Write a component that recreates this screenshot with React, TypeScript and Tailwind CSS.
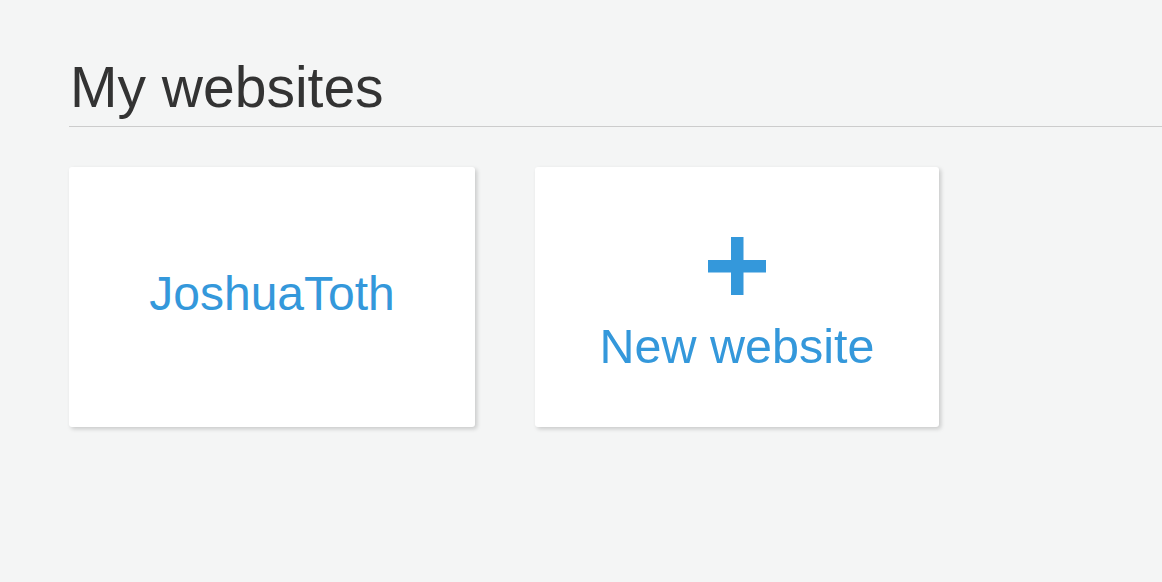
import React from "react";

export default function App() {
  const font = { fontFamily: '"Liberation Sans", Arial, Helvetica, sans-serif' };
  return (
    <div className="min-h-[582px] w-full bg-[#f4f5f5] pl-[69px] pt-[59px]" style={font}>
      <div className="border-b border-[#cccccc] pb-[10px]">
        <h1 className="ml-[1px] text-[57px] leading-none text-[#333333] font-normal">My websites</h1>
      </div>
      <div className="mt-[40px] flex gap-[60px]">
        <div className="flex h-[260px] w-[406px] items-center justify-center rounded-[3px] bg-white pb-[6px] shadow-[2px_2px_4px_rgba(0,0,0,0.18)]">
          <span className="text-[48px] leading-none text-[#3498db]">JoshuaToth</span>
        </div>
        <div className="flex h-[260px] w-[404px] flex-col items-center justify-center rounded-[3px] bg-white pt-[13px] shadow-[2px_2px_4px_rgba(0,0,0,0.18)]">
          <svg width="58" height="58" viewBox="0 0 58 58" className="-ml-[1px]">
            <rect x="23" y="0" width="12.5" height="58" fill="#3498db" />
            <rect x="0" y="23" width="58" height="12.5" fill="#3498db" />
          </svg>
          <span className="mt-[27px] text-[48.5px] leading-none text-[#3498db]">New website</span>
        </div>
      </div>
    </div>
  );
}
